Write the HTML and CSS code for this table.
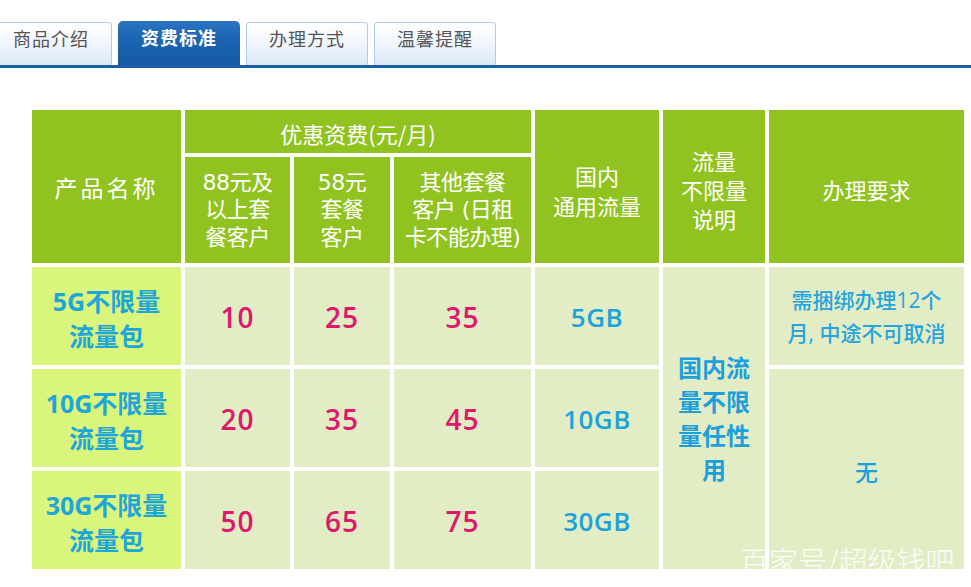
FILE: index.html
```html
<!DOCTYPE html>
<html lang="zh-CN">
<head>
<meta charset="utf-8">
<title>资费标准</title>
<link rel="stylesheet" href="styles.css">
</head>
<body>
<div class="page">
  <nav class="tabbar">
    <div class="tab first">商品介绍</div>
    <div class="tab active">资费标准</div>
    <div class="tab">办理方式</div>
    <div class="tab">温馨提醒</div>
  </nav>

  <div class="fee-table">
    <div class="hd name-hd">产品名称</div>
    <div class="hd fee-hd">优惠资费(元/月)</div>
    <div class="hd traffic-hd">国内<br>通用流量</div>
    <div class="hd unl-hd">流量<br>不限量<br>说明</div>
    <div class="hd req-hd">办理要求</div>

    <div class="hd sub">88元及<br>以上套<br>餐客户</div>
    <div class="hd sub">58元<br>套餐<br>客户</div>
    <div class="hd sub">其他套餐<br>客户 (日租<br>卡不能办理)</div>

    <div class="pname">5G不限量<br>流量包</div>
    <div class="cell num">10</div>
    <div class="cell num">25</div>
    <div class="cell num">35</div>
    <div class="cell gb">5GB</div>
    <div class="cell unl">国内流<br>量不限<br>量任性<br>用</div>
    <div class="cell req">需捆绑办理12个<br>月, 中途不可取消</div>

    <div class="pname">10G不限量<br>流量包</div>
    <div class="cell num">20</div>
    <div class="cell num">35</div>
    <div class="cell num">45</div>
    <div class="cell gb">10GB</div>
    <div class="cell none">无</div>

    <div class="pname">30G不限量<br>流量包</div>
    <div class="cell num">50</div>
    <div class="cell num">65</div>
    <div class="cell num">75</div>
    <div class="cell gb">30GB</div>
  </div>

  <div class="watermark">百家号/超级钱吧</div>
</div>
</body>
</html>
```

FILE: styles.css
```css
html, body {
  margin: 0;
  padding: 0;
  background: #ffffff;
}
body {
  font-family: "Noto Sans CJK SC", "Noto Sans", sans-serif;
  overflow: hidden;
}
.page {
  position: relative;
  width: 971px;
  height: 587px;
  overflow: hidden;
}

/* Tabs */
.tabbar {
  display: flex;
  align-items: flex-end;
  gap: 6px;
  padding-top: 21px;
  border-bottom: 3px solid #1b5da8;
}
.tab {
  box-sizing: border-box;
  width: 122px;
  height: 43px;
  border: 1px solid #b3cbe6;
  border-bottom: none;
  border-radius: 4px 4px 0 0;
  background: linear-gradient(#ffffff, #f3f7fd 40%, #dde9f7);
  color: #555555;
  font-size: 18px;
  letter-spacing: 1px;
  line-height: 30px;
  text-align: center;
}
.tab.first {
  margin-left: -10px;
}
.tab.active {
  height: 44px;
  border: none;
  border-radius: 5px 5px 0 0;
  background: linear-gradient(#2b74c2, #1a62b0 50%, #1559a6);
  color: #ffffff;
  font-weight: 700;
  line-height: 32px;
}

/* Table */
.fee-table {
  display: grid;
  grid-template-columns: 149px 105px 96px 137px 124px 102px 195px;
  grid-template-rows: 43px 106px 98px 98px 98px;
  gap: 4px;
  margin: 42px 0 0 32px;
  font-family: "Open Sans", "Noto Sans CJK SC", sans-serif;
}
.hd {
  background: #90c31f;
  color: #ffffff;
  font-family: "Noto Sans CJK SC", sans-serif;
  font-size: 22px;
  display: flex;
  align-items: center;
  justify-content: center;
  text-align: center;
  line-height: 28px;
}
.hd.sub {
  font-family: "DejaVu Sans", "Noto Sans CJK SC", sans-serif;
  font-size: 22px;
  letter-spacing: -0.5px;
  line-height: 27.5px;
}
.name-hd {
  grid-column: 1;
  grid-row: 1 / 3;
  letter-spacing: 3px;
  font-size: 23px;
}
.fee-hd {
  grid-column: 2 / 5;
  grid-row: 1;
  padding-top: 2px;
}
.traffic-hd {
  grid-column: 5;
  grid-row: 1 / 3;
  line-height: 30px;
  padding-top: 6px;
  box-sizing: border-box;
}
.unl-hd {
  grid-column: 6;
  grid-row: 1 / 3;
  line-height: 29px;
  padding-top: 6px;
  box-sizing: border-box;
}
.req-hd {
  grid-column: 7;
  grid-row: 1 / 3;
  padding-top: 4px;
  box-sizing: border-box;
}

.pname {
  background: #daf57c;
  color: #1ea6d8;
  font-size: 25px;
  font-weight: 700;
  line-height: 35px;
  display: flex;
  align-items: center;
  justify-content: center;
  text-align: center;
  padding-top: 6px;
  box-sizing: border-box;
}
.cell {
  background: #e2edc6;
  display: flex;
  align-items: center;
  justify-content: center;
  text-align: center;
}
.num {
  color: #e0176b;
  font-size: 28px;
  font-weight: 600;
  letter-spacing: 1px;
  padding-top: 2px;
  box-sizing: border-box;
}
.gb {
  color: #1ea2dc;
  font-size: 26px;
  font-weight: 600;
  letter-spacing: 0.5px;
  padding-top: 2px;
  box-sizing: border-box;
}
.unl {
  grid-column: 6;
  grid-row: 3 / 6;
  color: #1d9fdc;
  font-family: "Noto Sans CJK SC", sans-serif;
  font-size: 24px;
  font-weight: 700;
  line-height: 34px;
}
.req {
  grid-column: 7;
  grid-row: 3;
  color: #26a4de;
  font-size: 21px;
  font-weight: 500;
  line-height: 33px;
  padding-top: 2px;
  box-sizing: border-box;
}
.none {
  grid-column: 7;
  grid-row: 4 / 6;
  color: #1d9fdc;
  font-family: "Noto Sans CJK SC", sans-serif;
  font-size: 23px;
  font-weight: 500;
  padding-top: 4px;
  box-sizing: border-box;
}

.watermark {
  position: absolute;
  left: 740px;
  top: 540px;
  color: rgba(255, 255, 255, 0.92);
  font-family: "Noto Sans CJK SC", sans-serif;
  font-size: 29px;
  font-weight: 300;
  line-height: 40px;
  white-space: nowrap;
}
```
